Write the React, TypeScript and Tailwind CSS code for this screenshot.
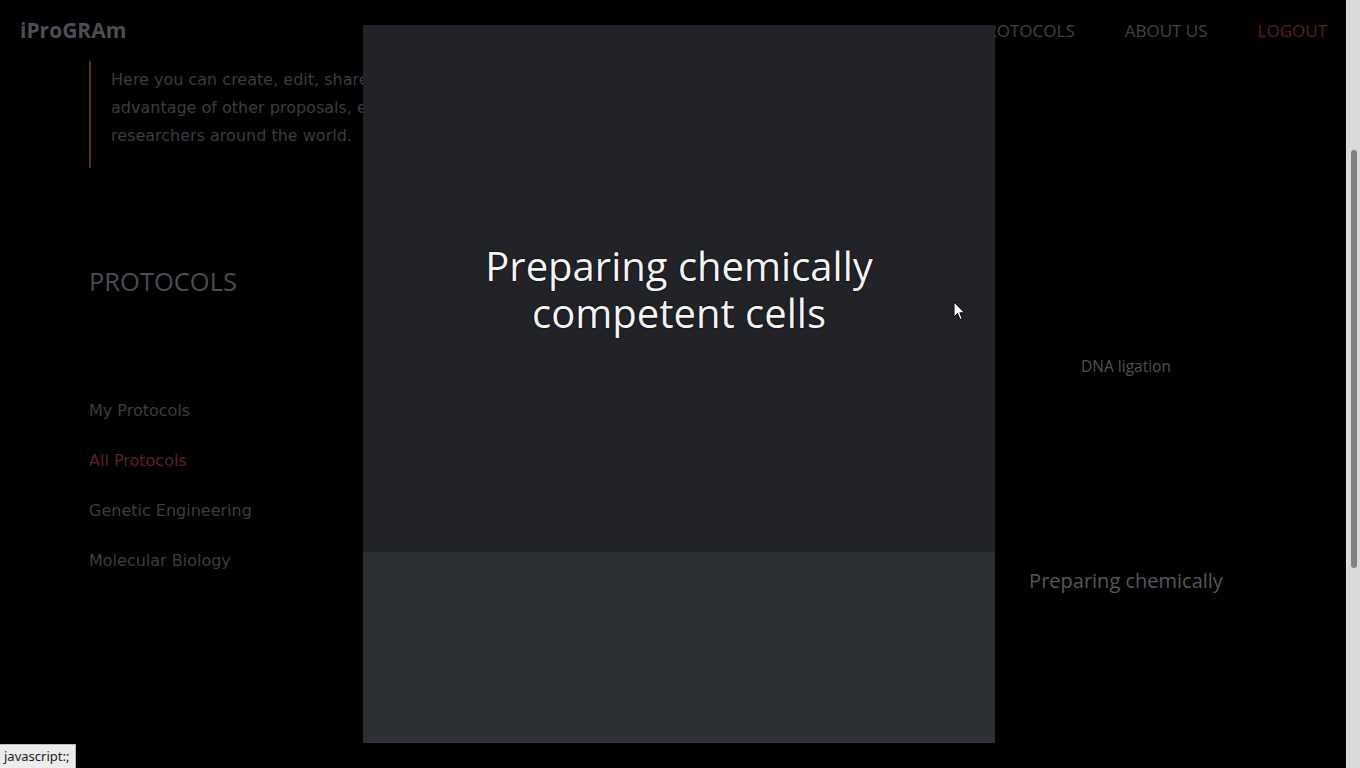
import React from "react";

const sidebarItems = [
  { label: "My Protocols", active: false },
  { label: "All Protocols", active: true },
  { label: "Genetic Engineering", active: false },
  { label: "Molecular Biology", active: false },
];

const row1 = ["BetaGalactosidase Assay", "Colony PCR", "DNA ligation"];
const row2 = ["DNA Precipitation", "E.coli Western Blot", "Preparing chemically"];

export default function App() {
  return (
    <div className="flex h-[768px] w-[1360px] overflow-hidden bg-black">
      <div className="relative flex w-[1346px] flex-col">
        {/* Navbar */}
        <nav className="flex h-[61px] items-center justify-between pl-[20px] pr-[19px]">
          <div className="text-[21px] font-bold text-[#4b4e56]" style={{ fontFamily: '"Open Sans", sans-serif' }}>
            iProGRAm
          </div>
          <div className="flex items-center gap-[50px] text-[17px] text-[#40424a]" style={{ fontFamily: '"Open Sans", sans-serif' }}>
            <span>HOME</span>
            <span>PROTOCOLS</span>
            <span>ABOUT US</span>
            <span className="text-[#5c1f24]">LOGOUT</span>
          </div>
        </nav>

        {/* Intro blockquote */}
        <div className="ml-[89px] h-[107px] w-[640px] border-l-2 border-[#5b2a2d] pl-[20px] pt-[5px] text-[16px] leading-[28px] text-[#3a3c42]" style={{ fontFamily: '"DejaVu Sans", sans-serif' }}>
          Here you can create, edit, share and search protocols. Take
          <br />
          advantage of other proposals, enrich them and share yours with
          <br />
          researchers around the world.
        </div>

        {/* Content */}
        <div className="flex">
          <aside className="w-[360px] shrink-0 pl-[89px]">
            <h2 className="mt-[97px] text-[25.5px] leading-[32px] text-[#4a4c54]" style={{ fontFamily: '"Open Sans", sans-serif' }}>
              PROTOCOLS
            </h2>
            <ul className="mt-[104px] flex flex-col gap-[30px] text-[16px] leading-[20px]" style={{ fontFamily: '"DejaVu Sans", sans-serif' }}>
              {sidebarItems.map((it) => (
                <li key={it.label} className={it.active ? "text-[#5a2126]" : "text-[#3b3d43]"}>
                  {it.label}
                </li>
              ))}
            </ul>
          </aside>

          <main className="flex-1">
            <h1 className="mt-[78px] text-[36px] leading-[44px] text-[#2e2f33]" style={{ fontFamily: '"Open Sans", sans-serif' }}>
              DNA ligation
            </h1>
            <div className="mt-[10px] grid grid-cols-[300px_300px_300px] pl-[16px]" style={{ fontFamily: '"Open Sans", sans-serif' }}>
              {row1.map((t) => (
                <div key={t} className="h-[215px] pt-[56px] text-center text-[15.5px] leading-[20px] text-[#4e5056]">
                  {t}
                </div>
              ))}
              {row2.map((t) => (
                <div key={t} className="h-[215px] pt-[56px] text-center text-[20px] leading-[20px] text-[#55575d]">
                  {t}
                </div>
              ))}
            </div>
          </main>
        </div>

        {/* Modal card overlay */}
        <div className="absolute left-[363px] top-[25px] flex h-[718px] w-[632px] flex-col">
          <div className="flex h-[527px] items-center justify-center bg-[#212328]">
            <h3
              className="text-center text-[40px] leading-[47px] text-[#f4f4f4]"
              style={{ fontFamily: '"Open Sans", sans-serif', textShadow: "0 0 2px #000, 0 0 1px #000" }}
            >
              Preparing chemically
              <br />
              competent cells
            </h3>
          </div>
          <div className="flex-1 bg-[#2d3035]" />
        </div>

        {/* Mouse cursor */}
        <svg className="absolute left-[953px] top-[301px]" width="13" height="21" viewBox="0 0 13 21">
          <path d="M1 1 L1 16 L4.5 12.5 L7 18.5 L9.2 17.6 L6.8 11.8 L11.5 11.8 Z" fill="#ffffff" stroke="#000000" strokeWidth="1" strokeLinejoin="round" />
        </svg>

        {/* Status bubble */}
        <div
          className="absolute bottom-0 left-0 flex h-[24px] w-[76px] items-center border-r border-t border-[#b9b9b9] bg-[#ececec] pl-[4px] text-[13px] text-[#1b1b1b]"
          style={{ fontFamily: '"Noto Sans", sans-serif' }}
        >
          javascript:;
        </div>
      </div>

      {/* Scrollbar */}
      <div className="flex w-[14px] flex-col border-l border-[#e6e6e6] bg-[#dadada] pl-[4px]">
        <div className="mt-[150px] h-[418px] w-[6px] rounded-full bg-[#7f8282]" />
      </div>
    </div>
  );
}
